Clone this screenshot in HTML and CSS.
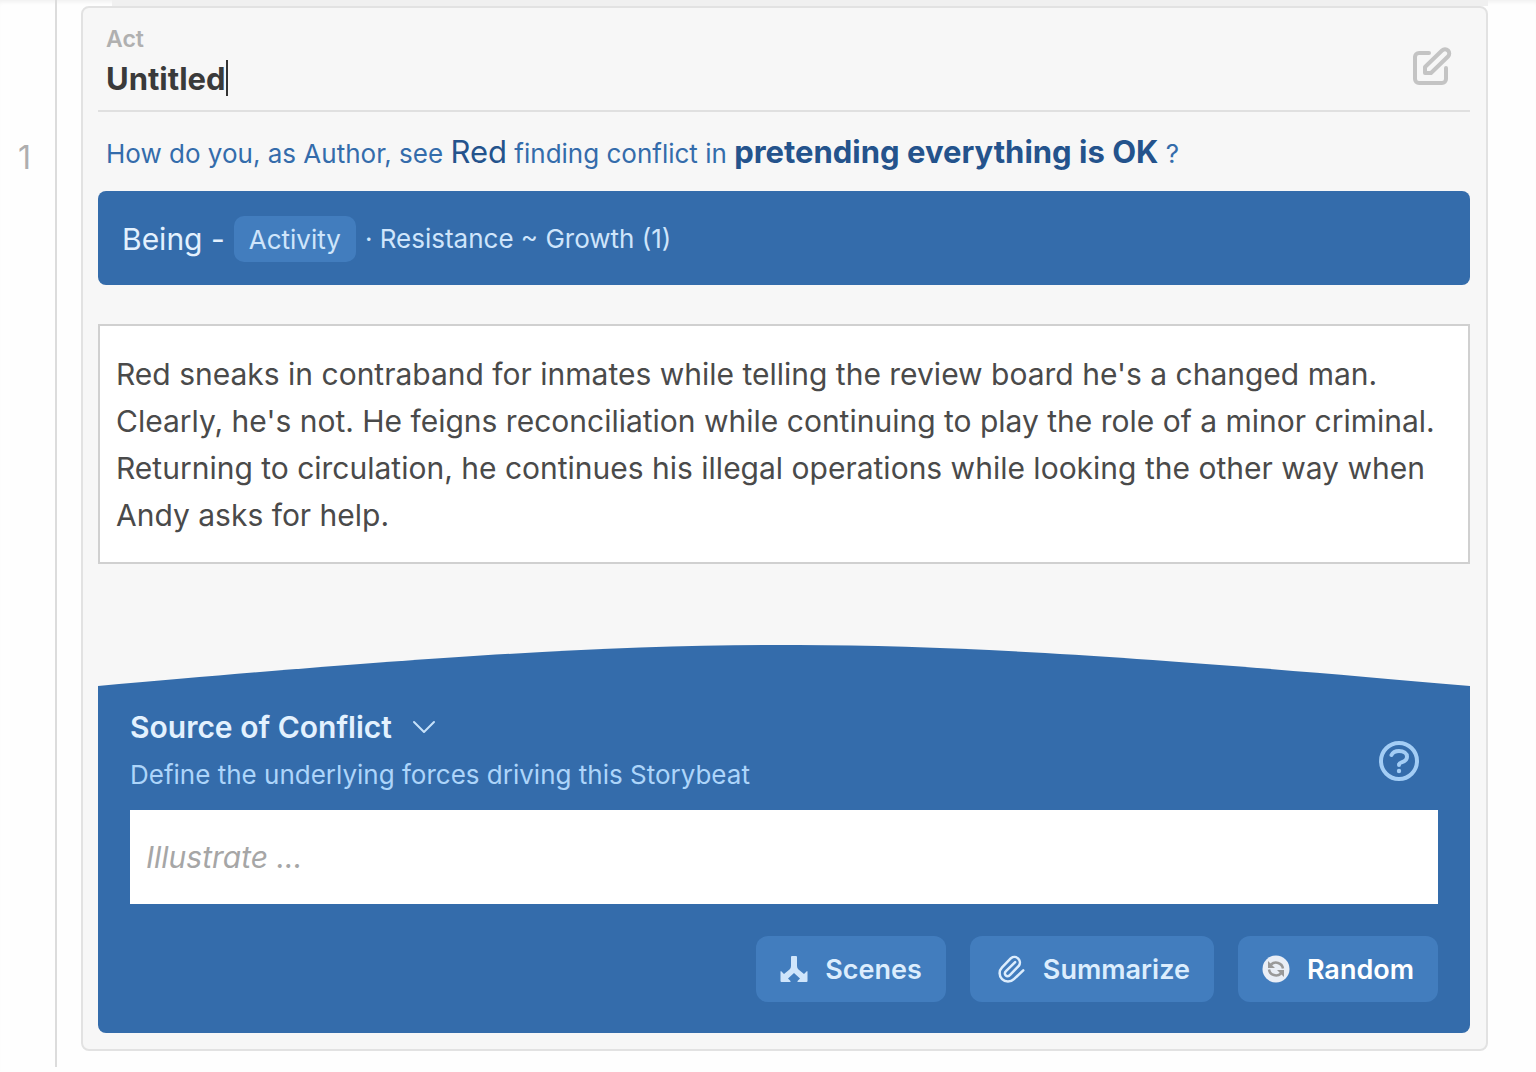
FILE: index.html
```html
<!DOCTYPE html>
<html lang="en">
<head>
    <meta charset="UTF-8">
    <meta name="viewport" content="width=device-width, initial-scale=1.0">
    <title>Storybeat</title>
    <link rel="stylesheet" href="styles.css">
</head>
<body>
    <div class="page">
        <aside class="gutter">1</aside>

        <main class="content">
            <div class="previous"></div>
            <article class="card">
                <header class="card-header">
                    <div class="title">
                        <label for="act-title">Act</label>
                        <div class="title-field">
                            <input type="text" id="act-title" value="Untitled" size="6">
                            <span class="caret"></span>
                        </div>
                    </div>
                    <button class="icon-button" aria-label="Edit">
                        <svg width="40" height="40" viewBox="0 0 40 40" fill="none" stroke="#c4c4c4" stroke-width="4" stroke-linecap="round" stroke-linejoin="round">
                            <path d="M17 7H7a4 4 0 0 0-4 4v22a4 4 0 0 0 4 4h23a4 4 0 0 0 4-4V22"/>
                            <path d="M13 27v-6L30 4.500a4 4 0 0 1 6 6L19 27z"/>
                        </svg>
                    </button>
                </header>

                <p class="question">How do you, as Author, see <span class="player">Red</span> finding conflict in <strong>pretending everything is OK</strong> ?</p>

                <div class="beat">
                    <span class="beat-name">Being -</span>
                    <button class="tag">Activity</button>
                    <span>· Resistance ~ Growth (1)</span>
                </div>

                <textarea class="story" rows="4" aria-label="Storybeat text" spellcheck="false">Red sneaks in contraband for inmates while telling the review board he's a changed man. Clearly, he's not. He feigns reconciliation while continuing to play the role of a minor criminal. Returning to circulation, he continues his illegal operations while looking the other way when Andy asks for help.</textarea>

                <svg class="arc" viewBox="0 0 1372 41" preserveAspectRatio="none">
                    <path fill="#346cab" d="M0 41C617-13.700 755-13.700 1372 41z"/>
                </svg>
                <section class="source">
                    <div class="source-header">
                        <div>
                            <h2>
                                <button class="toggle">
                                    Source of Conflict
                                    <svg width="24" height="16" viewBox="0 0 24 16" fill="none" stroke="#c6e1fa" stroke-width="2" stroke-linecap="round" stroke-linejoin="round">
                                        <path d="M2 3l10 10L22 3"/>
                                    </svg>
                                </button>
                            </h2>
                            <label for="illustrate">Define the underlying forces driving this Storybeat</label>
                        </div>
                        <button class="icon-button" aria-label="Help">
                            <svg width="40" height="40" viewBox="0 0 40 40" fill="none" stroke="#a3cdf5" stroke-width="4" stroke-linecap="round" stroke-linejoin="round">
                                <circle cx="20" cy="20" r="18"/>
                                <path d="M12.500 14c1.200-2.500 4-4 7.500-4 4.800 0 8 2.300 8 5.700 0 3.300-2.500 4.700-5.500 5.600-2 .6-2.500 1.200-2.500 2.700"/>
                                <circle cx="20" cy="30" r="2.200" fill="#a3cdf5" stroke="none"/>
                            </svg>
                        </button>
                    </div>

                    <input type="text" class="illustrate" id="illustrate" placeholder="Illustrate ...">

                    <div class="actions">
                        <button class="action">
                            <svg width="28" height="28" viewBox="0 0 28 28" fill="#cfe5fb">
                                <path d="M12 1h4q1 0 1 1v9q0 2 1.500 3.500L24 19l3-3q.5 0 .5 1v9q0 1-1 1H18q-1 0-.5-1l2.500-2.500L14 18l-6 5.500 2.500 2.500q.5 1-.5 1H1.500q-1 0-1-1V17q0-1 .5-1l3 3 5.500-4.500Q11 13 11 11V2q0-1 1-1z"/>
                            </svg>
                            Scenes
                        </button>
                        <button class="action">
                            <svg width="32" height="28" viewBox="0 2 23 20" fill="none" stroke="#dcedfd" stroke-width="1.800" stroke-linecap="round" stroke-linejoin="round">
                                <path d="M15.200 7l-6.600 6.600a2 2 0 1 0 2.800 2.800l6.400-6.600a4 4 0 0 0-5.600-5.600l-6.400 6.600a6 6 0 1 0 8.500 8.500L21 13"/>
                            </svg>
                            Summarize
                        </button>
                        <button class="action random">
                            <svg width="28" height="28" viewBox="0 0 28 28">
                                <circle cx="14" cy="14" r="13.500" fill="#e9eef6"/>
                                <path fill="none" stroke="#999" stroke-width="2.500" d="M9 9.500c4-3.500 11-2 12 4M19 18.500c-4 3.500-11 2-12-4"/>
                                <path fill="#999" d="M6 6v7h7zM22 22v-7h-7z"/>
                            </svg>
                            Random
                        </button>
                    </div>
                </section>
            </article>
        </main>
    </div>
</body>
</html>
```

FILE: styles.css
```css
* {
    box-sizing: border-box;
}

body {
    margin: 0;
    background-color: #fefefe;
    color: #4a4a4a;
    font-family: 'Inter', sans-serif;
    box-shadow: inset 0 4px 4px -2px rgba(0, 0, 0, 0.06);
}

button,
input,
textarea {
    font-family: inherit;
    border: none;
    outline: none;
}

button {
    cursor: pointer;
}

svg {
    display: block;
    flex: none;
}

.page {
    display: flex;
}

.gutter {
    width: 57px;
    margin-bottom: 4px;
    padding: 138px 24px 0 0;
    border-right: 2px solid #dcdcdc;
    color: #aeaeae;
    font-size: 32px;
    line-height: 40px;
    text-align: right;
}

.content {
    flex: 1;
    padding: 0 48px 20px 24px;
}

.previous {
    height: 6px;
    margin-left: 31px;
    background-color: #f0f0f0;
}

.card {
    padding: 14px 16px 16px 15px;
    background-color: #f7f7f7;
    border: 2px solid #e2e2e2;
    border-radius: 8px;
}

.card-header {
    display: flex;
    justify-content: space-between;
    align-items: center;
    padding: 0 18px 10px 8px;
    border-bottom: 2px solid #e0e0e0;
}

.title label {
    display: block;
    color: #b0b0b0;
    font-size: 23px;
    font-weight: 600;
    line-height: 34px;
}

.title-field {
    display: flex;
    align-items: center;
    height: 44px;
}

.title-field input {
    field-sizing: content;
    padding: 0;
    background: none;
    color: #3a3a3a;
    font-size: 31px;
    font-weight: 700;
}

.caret {
    width: 2px;
    height: 36px;
    background-color: #333;
}

.icon-button {
    padding: 0;
    background: none;
}

.card-header .icon-button {
    padding-top: 10px;
}

.question {
    margin: 16px 0 14px;
    padding-left: 8px;
    color: #346cab;
    font-size: 26px;
    line-height: 47px;
}

.question .player {
    color: #24538c;
    font-size: 31px;
}

.question strong {
    color: #24538c;
    font-size: 31px;
    font-weight: 700;
}

.beat {
    display: flex;
    align-items: center;
    gap: 9px;
    padding: 25px 24px 23px;
    background-color: #346cab;
    border-radius: 8px;
    color: #cfe5fb;
    font-size: 26px;
    line-height: 46px;
}

.beat-name {
    color: #e3f1fe;
    font-size: 30px;
}

.tag {
    height: 46px;
    padding: 0 15px;
    background-color: #427dbe;
    border-radius: 10px;
    color: #cfe5fb;
    font-size: 26px;
}

.story {
    display: block;
    width: 100%;
    margin: 39px 0 81px;
    padding: 25px 16px 23px;
    background-color: white;
    border: 2px solid #d0d0d0;
    color: #4a4a4a;
    font-size: 30px;
    line-height: 47px;
    overflow: hidden;
    resize: none;
}

.arc {
    width: 100%;
    height: 41px;
}

.source {
    padding: 17px 32px 31px;
    background-color: #346cab;
    border-radius: 0 0 8px 8px;
}

.source-header {
    display: flex;
    justify-content: space-between;
    align-items: center;
    padding-right: 19px;
    margin-bottom: 11px;
}

.source-header .icon-button {
    padding-top: 20px;
}

.source h2 {
    margin: 0;
}

.toggle {
    display: flex;
    align-items: center;
    gap: 20px;
    padding: 0;
    background: none;
    color: #e3f1fe;
    font-size: 30px;
    font-weight: 600;
    line-height: 48px;
}

.source label {
    display: block;
    color: #add5fa;
    font-size: 26px;
    line-height: 48px;
}

.illustrate {
    width: 100%;
    height: 94px;
    padding: 0 16px;
    background-color: white;
    color: #4a4a4a;
    font-size: 30px;
}

.illustrate::placeholder {
    color: #a6a6a6;
    font-style: italic;
}

.actions {
    display: flex;
    justify-content: flex-end;
    gap: 24px;
    margin-top: 32px;
}

.action {
    display: flex;
    align-items: center;
    gap: 17px;
    height: 66px;
    padding: 0 24px;
    background-color: #427dbe;
    border-radius: 12px;
    color: #dcedfd;
    font-size: 27px;
    font-weight: 600;
}

.random {
    color: white;
}
```
